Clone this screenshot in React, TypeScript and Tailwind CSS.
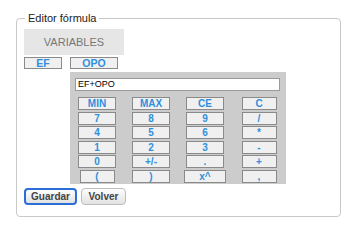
const keys: string[] = [
  "MIN", "MAX", "CE", "C",
  "7", "8", "9", "/",
  "4", "5", "6", "*",
  "1", "2", "3", "-",
  "0", "+/-", ".", "+",
  "(", ")", "x^", ",",
];

function Key({ label, col }: { label: string; col: number }) {
  const wide = label === "x^";
  const narrow = label === "(";
  const w = wide ? "w-[42px]" : narrow ? "w-[35px]" : col === 3 ? "w-[35px]" : "w-[38px]";
  return (
    <div className="flex justify-center">
      <button
        className={`h-[13px] ${w} bg-[#f0f0f0] border border-[#8a8a8a] text-[10px] leading-[11px] font-bold text-[#2f8fdc] flex items-center justify-center`}
      >
        {label}
      </button>
    </div>
  );
}

export default function App() {
  return (
    <div className="w-[350px] h-[229px] bg-white pt-[12px] pl-[16px]" style={{ fontFamily: '"Liberation Sans", Arial, sans-serif' }}>
      <fieldset className="w-[325px] h-[205px] border border-[#c8c8c8] rounded-[4px] px-[7px] pb-[10px]">
        <legend className="ml-[1px] px-[3px] text-[11px] leading-[13px] text-[#222]">Editor fórmula</legend>

        {/* Variables */}
        <div className="mt-[4px] w-[100px] h-[26px] bg-[#e6e6e6] flex items-center justify-center text-[11px] text-[#777]">
          VARIABLES
        </div>
        <div className="mt-[2px] flex gap-[8px]">
          <button className="w-[38px] h-[12px] bg-[#f0f0f0] border border-[#8a8a8a] text-[10.5px] leading-[10px] font-bold text-[#2f8fdc] flex items-center justify-center">
            EF
          </button>
          <button className="w-[48px] h-[12px] bg-[#f0f0f0] border border-[#8a8a8a] text-[10.5px] leading-[10px] font-bold text-[#2f8fdc] flex items-center justify-center">
            OPO
          </button>
        </div>

        {/* Calculator */}
        <div className="ml-[46px] mt-[3px] w-[216px] h-[112px] bg-[#cccccc] pt-[6px] px-[5px]">
          <div className="w-[205px] h-[13px] bg-white border border-[#999] text-[9px] leading-[11px] text-black pl-[2px]">
            EF+OPO
          </div>
          <div className="mt-[6px] grid grid-cols-4 gap-y-[1.5px] -mx-[5px]">
            {keys.map((k, i) => (
              <Key key={k} label={k} col={i % 4} />
            ))}
          </div>
        </div>

        {/* Actions */}
        <div className="mt-[4px] flex gap-[4px]">
          <button className="w-[53px] h-[17px] rounded-[4px] border-2 border-[#2a6fd6] bg-gradient-to-b from-[#fdfdfd] to-[#e2e2e2] text-[10px] font-bold text-[#444] flex items-center justify-center">
            Guardar
          </button>
          <button className="w-[45px] h-[17px] rounded-[4px] border border-[#bdbdbd] bg-gradient-to-b from-[#fdfdfd] to-[#e2e2e2] text-[10px] font-bold text-[#444] flex items-center justify-center">
            Volver
          </button>
        </div>
      </fieldset>
    </div>
  );
}
